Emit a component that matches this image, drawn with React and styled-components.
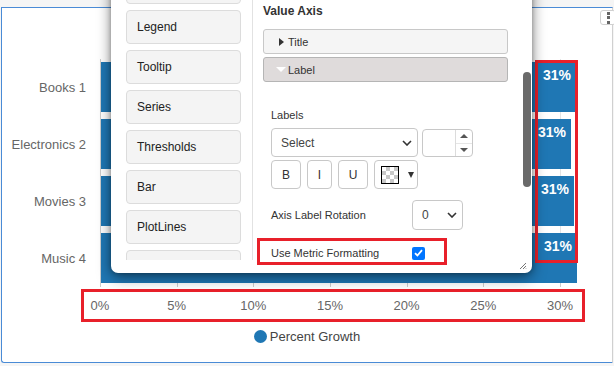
import React from 'react'
import styled, { createGlobalStyle } from 'styled-components'

const GlobalStyle = createGlobalStyle`
  html, body {
    margin: 0;
    padding: 0;
    background: #f5f5f5;
    font-family: "Liberation Sans", Arial, sans-serif;
  }
  #root {
    width: 614px;
    height: 366px;
    overflow: hidden;
  }
`

const RED = '#e8202a'
const BLUE = '#1f77b4'
const STEP = 76.667 // px per 5%

const Page = styled.div`
  position: relative;
  width: 614px;
  height: 366px;
  overflow: hidden;
  box-sizing: border-box;
  padding: 7px 0 0 1px;
`

const Card = styled.div`
  position: relative;
  width: 612px;
  height: 356px;
  box-sizing: border-box;
  border: 1px solid #4a8bd6;
  border-right-color: #d0d0d0;
  border-radius: 0 0 0 3px;
  background: #fff;
  padding-top: 51px;
`

const MenuButton = styled.div`
  position: absolute;
  top: 2px;
  right: -4px;
  width: 16px;
  height: 15px;
  box-sizing: border-box;
  border: 1px solid #d0d0d0;
  border-radius: 3px;
  background: #fff;
  display: flex;
  flex-direction: column;
  align-items: center;
  justify-content: center;
  gap: 1.5px;

  span {
    width: 3px;
    height: 3px;
    background: #666;
  }
`

const Chart = styled.div`
  display: grid;
  grid-template-columns: 98px 1fr;
`

const CategoryAxis = styled.div`
  display: flex;
  flex-direction: column;
  gap: 7px;
  padding-top: 3px;
`

const Category = styled.div`
  height: 50px;
  display: flex;
  align-items: center;
  justify-content: flex-end;
  padding: 1px 14px 0 0;
  box-sizing: border-box;
  font-size: 13px;
  color: #666;
`

const Plot = styled.div`
  position: relative;
  height: 224px;
  box-sizing: border-box;
  padding: 3px 0 0 1px;
  display: flex;
  flex-direction: column;
  gap: 7px;
  background:
    linear-gradient(#cccccc, #cccccc) 0 0 / 1px 100% no-repeat,
    repeating-linear-gradient(to right, #e4e4e4 0 1px, transparent 1px ${STEP}px);
`

const Bar = styled.div`
  height: 50px;
  flex-shrink: 0;
  box-sizing: border-box;
  background: ${BLUE};
  display: flex;
  justify-content: flex-end;
  align-items: flex-start;
  padding: 5px 5px 0 0;
  color: #fff;
  font-size: 14px;
  line-height: 16px;
  font-weight: 700;
`

const ValueHighlight = styled.div`
  position: absolute;
  left: 435px;
  top: 1px;
  width: 43px;
  height: 203px;
  box-sizing: border-box;
  border: 3px solid ${RED};
  pointer-events: none;
`

const AxisTicks = styled.div`
  grid-column: 2;
  height: 4px;
  background: repeating-linear-gradient(to right, #cccccc 0 1px, transparent 1px ${STEP}px);
`

const TickBox = styled.div`
  margin: 2px 0 0 79px;
  width: 504px;
  height: 33px;
  box-sizing: border-box;
  border: 3px solid ${RED};
  display: flex;
  align-items: center;
  justify-content: space-between;
  padding: 0 22px 1px 16px;
`

const Tick = styled.div`
  width: 0;
  display: flex;
  justify-content: center;
  white-space: nowrap;
  font-size: 13px;
  color: #666;
`

const Legend = styled.div`
  margin-top: 7px;
  display: flex;
  justify-content: center;
  align-items: center;
  gap: 3px;
  font-size: 13px;
  color: #444;
`

const LegendDot = styled.span`
  width: 13px;
  height: 13px;
  border-radius: 50%;
  background: ${BLUE};
`

/* settings popup */

const Popup = styled.div`
  position: absolute;
  left: 111px;
  top: -44px;
  width: 421px;
  height: 317px;
  background: #fff;
  border-radius: 0 0 7px 7px;
  box-shadow: 0 4px 14px rgba(0, 0, 0, 0.5), 0 0 4px rgba(0, 0, 0, 0.25);
  display: flex;
  z-index: 5;
`

const SideList = styled.div`
  flex-shrink: 0;
  margin-left: 15px;
  width: 115px;
  height: 304px;
  box-sizing: border-box;
  padding-top: 14px;
  overflow: hidden;
  display: flex;
  flex-direction: column;
  gap: 6px;
`

const SideButton = styled.div`
  flex-shrink: 0;
  height: 34px;
  box-sizing: border-box;
  border: 1px solid #dcdcdc;
  border-radius: 4px;
  background: #f4f4f4;
  display: flex;
  align-items: center;
  padding-left: 10px;
  font-size: 12px;
  color: #222;
`

const Divider = styled.div`
  flex-shrink: 0;
  margin-left: 11px;
  width: 1px;
  height: 304px;
  background: #e2e2e2;
`

const Panel = styled.div`
  flex-shrink: 0;
  width: 255px;
  height: 312px;
  box-sizing: border-box;
  padding: 48px 0 0 10px;
  overflow: hidden;
`

const PanelTitle = styled.div`
  font-size: 12px;
  line-height: 14px;
  font-weight: 700;
  color: #333;
`

const AccHeader = styled.div`
  margin-top: ${(p) => (p.open ? 3 : 11)}px;
  height: 25px;
  box-sizing: border-box;
  border: 1px solid ${(p) => (p.open ? '#b5b5b5' : '#c8c8c8')};
  border-radius: 3px;
  background: ${(p) => (p.open ? '#dfdbdb' : '#f5f5f5')};
  display: flex;
  align-items: center;
  gap: ${(p) => (p.open ? 2 : 4)}px;
  padding-left: ${(p) => (p.open ? 12 : 15)}px;
  font-size: 11px;
  color: #333;
`

const Caret = styled.span`
  width: 0;
  height: 0;
  ${(p) =>
    p.open
      ? `border-top: 5px solid #fff;
         border-left: 5px solid transparent;
         border-right: 5px solid transparent;`
      : `border-left: 5px solid #333;
         border-top: 4px solid transparent;
         border-bottom: 4px solid transparent;`}
`

const AccBody = styled.div`
  padding-left: 8px;
`

const FieldLabel = styled.div`
  margin-top: 27px;
  font-size: 11px;
  line-height: 13px;
  color: #333;
`

const Row = styled.div`
  display: flex;
  align-items: flex-start;
  gap: ${(p) => p.gap || 4}px;
  margin-top: ${(p) => p.top || 0}px;
`

const SelectBox = styled.div`
  width: ${(p) => p.w}px;
  height: ${(p) => p.h || 29}px;
  box-sizing: border-box;
  border: 1px solid #c8c8c8;
  border-radius: 4px;
  background: #fff;
  display: flex;
  align-items: center;
  justify-content: space-between;
  padding: 0 5px 0 9px;
  font-size: 12px;
  color: #444;
`

const NumberBox = styled.div`
  margin-top: 1px;
  width: 51px;
  height: 28px;
  box-sizing: border-box;
  border: 1px solid #c8c8c8;
  border-radius: 4px;
  display: flex;
  justify-content: flex-end;
`

const Spin = styled.div`
  width: 16px;
  border-left: 1px solid #dcdcdc;
  display: flex;
  flex-direction: column;

  span {
    flex: 1;
    display: flex;
    align-items: center;
    justify-content: center;
  }
  span + span {
    border-top: 1px solid #e6e6e6;
  }
`

const SpinArrow = styled.i`
  width: 0;
  height: 0;
  border-left: 4px solid transparent;
  border-right: 4px solid transparent;
  ${(p) => (p.up ? 'border-bottom: 4px solid #555;' : 'border-top: 4px solid #555;')}
`

const StyleButton = styled.div`
  width: ${(p) => p.w}px;
  height: 29px;
  box-sizing: border-box;
  border: 1px solid #c8c8c8;
  border-radius: 4px;
  background: #fff;
  display: flex;
  align-items: center;
  justify-content: center;
  font-size: 12px;
  color: #333;
`

const ColorButton = styled(StyleButton)`
  justify-content: flex-start;
  padding-left: 6px;
  gap: 9px;
`

const Swatch = styled.span`
  width: 18px;
  height: 18px;
  box-sizing: border-box;
  border: 1px solid #000;
  background-color: #fff;
  background-image:
    linear-gradient(45deg, #c8c8c8 25%, transparent 25%, transparent 75%, #c8c8c8 75%),
    linear-gradient(45deg, #c8c8c8 25%, transparent 25%, transparent 75%, #c8c8c8 75%);
  background-size: 8px 8px;
  background-position: 0 0, 4px 4px;
`

const DropCaret = styled.span`
  width: 0;
  height: 0;
  border-top: 6px solid #333;
  border-left: 3.5px solid transparent;
  border-right: 3.5px solid transparent;
`

const FieldRow = styled.div`
  display: grid;
  grid-template-columns: 141px auto;
  align-items: center;
  margin-top: 11px;
  height: 30px;
  font-size: 11px;
  color: #333;
`

const MetricRow = styled.div`
  display: grid;
  grid-template-columns: 141px auto;
  align-items: center;
  margin: 8px 0 0 -14px;
  width: 190px;
  height: 27px;
  box-sizing: border-box;
  border: 3px solid ${RED};
  padding: 3px 0 0 11px;
  font-size: 11px;
  color: #333;
`

const Check = styled.span`
  width: 13px;
  height: 13px;
  border-radius: 2px;
  background: #0075ff;
  display: flex;
  align-items: center;
  justify-content: center;
`

const ScrollTrack = styled.div`
  flex-shrink: 0;
  margin-left: 15px;
  width: 8px;
  padding-top: 116px;
`

const ScrollThumb = styled.div`
  height: 115px;
  border-radius: 4px;
  background: #6a6a6a;
`

const Grip = styled.svg`
  position: absolute;
  right: 5px;
  bottom: 3px;
`

const Chevron = () => (
  <svg width="10" height="6" viewBox="0 0 10 6">
    <path d="M1 1l4 4 4-4" fill="none" stroke="#333" strokeWidth="1.6" />
  </svg>
)

const categories = [
  { name: 'Books 1', pct: 30.98 },
  { name: 'Electronics 2', pct: 30.65 },
  { name: 'Movies 3', pct: 30.85 },
  { name: 'Music 4', pct: 31.04 },
]

const ticks = ['0%', '5%', '10%', '15%', '20%', '25%', '30%']

// first and last entries are scrolled out of view, so no label shows
const sections = ['', 'Legend', 'Tooltip', 'Series', 'Thresholds', 'Bar', 'PlotLines', '']

export default function App() {
  return (
    <>
      <GlobalStyle />
      <Page>
        <Card>
          <MenuButton>
            <span />
            <span />
            <span />
          </MenuButton>

          <Chart>
            <CategoryAxis>
              {categories.map((c) => (
                <Category key={c.name}>{c.name}</Category>
              ))}
            </CategoryAxis>
            <Plot>
              {categories.map((c) => (
                <Bar key={c.name} style={{ width: (c.pct * STEP) / 5 }}>
                  31%
                </Bar>
              ))}
              <ValueHighlight />
            </Plot>
            <AxisTicks />
          </Chart>

          <TickBox>
            {ticks.map((t) => (
              <Tick key={t}>{t}</Tick>
            ))}
          </TickBox>

          <Legend>
            <LegendDot />
            Percent Growth
          </Legend>
        </Card>

        <Popup>
          <SideList>
            {sections.map((s, i) => (
              <SideButton key={i}>{s}</SideButton>
            ))}
          </SideList>
          <Divider />
          <Panel>
            <PanelTitle>Value Axis</PanelTitle>
            <AccHeader>
              <Caret />
              Title
            </AccHeader>
            <AccHeader open>
              <Caret open />
              Label
            </AccHeader>
            <AccBody>
              <FieldLabel>Labels</FieldLabel>
              <Row top={6}>
                <SelectBox w={147}>
                  Select
                  <Chevron />
                </SelectBox>
                <NumberBox>
                  <Spin>
                    <span>
                      <SpinArrow up />
                    </span>
                    <span>
                      <SpinArrow />
                    </span>
                  </Spin>
                </NumberBox>
              </Row>
              <Row top={3} gap={6}>
                <StyleButton w={30}>B</StyleButton>
                <StyleButton w={25}>I</StyleButton>
                <StyleButton w={30}>U</StyleButton>
                <ColorButton w={44}>
                  <Swatch />
                  <DropCaret />
                </ColorButton>
              </Row>
              <FieldRow>
                Axis Label Rotation
                <SelectBox w={51} h={30}>
                  0
                  <Chevron />
                </SelectBox>
              </FieldRow>
              <MetricRow>
                Use Metric Formatting
                <Check>
                  <svg width="9" height="8" viewBox="0 0 9 8">
                    <path d="M1 4.2l2.4 2.3L8 1.2" fill="none" stroke="#fff" strokeWidth="1.8" />
                  </svg>
                </Check>
              </MetricRow>
            </AccBody>
          </Panel>
          <ScrollTrack>
            <ScrollThumb />
          </ScrollTrack>
          <Grip width="8" height="8" viewBox="0 0 8 8">
            <path d="M7 1L1 7M7 4L4 7M7 6.5L6.5 7" stroke="#777" strokeWidth="1" />
          </Grip>
        </Popup>
      </Page>
    </>
  )
}
